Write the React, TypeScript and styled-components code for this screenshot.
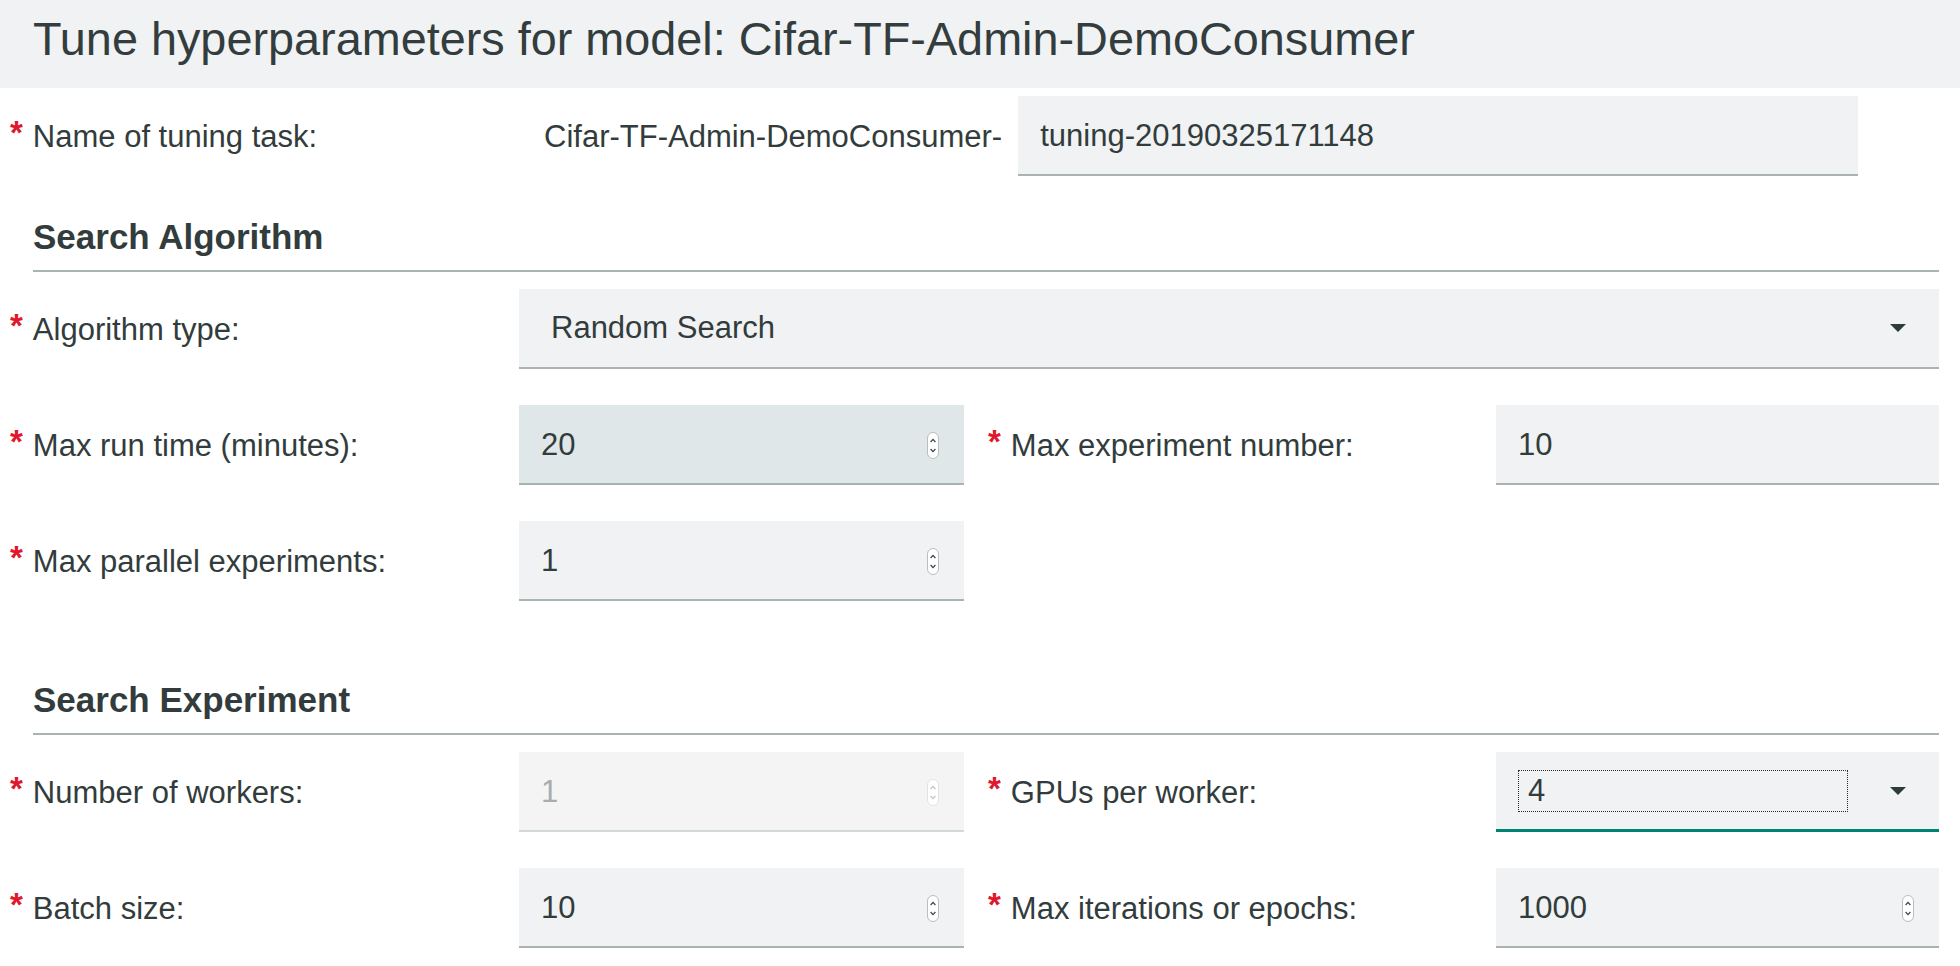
import React from "react";
import styled, { createGlobalStyle, css } from "styled-components";

const GlobalStyle = createGlobalStyle`
  html, body { margin: 0; padding: 0; background: #ffffff; }
  body {
    font-family: "Liberation Sans", Arial, Helvetica, sans-serif;
    color: #323c3c;
  }
  * { box-sizing: border-box; }
`;

const Header = styled.header`
  height: 88px;
  background: #f0f2f3;
  padding: 0 0 10px 33px;
`;

const Title = styled.h1`
  margin: 0;
  font-size: 46.8px;
  font-weight: 400;
  line-height: 78px;
  color: #333d3d;
  white-space: nowrap;
`;

const Form = styled.form`
  padding: 8px 21px 40px 10px;
  display: flex;
  flex-direction: column;
`;

const NameRow = styled.div`
  display: flex;
  align-items: center;
  height: 80px;
`;

const FieldLabel = styled.label<{ $indent?: number; $width?: number }>`
  display: flex;
  align-items: center;
  padding-top: 2px;
  padding-left: ${(p) => p.$indent ?? 0}px;
  ${(p) => (p.$width ? css`width: ${p.$width}px; flex: none;` : "")}
  font-size: 31px;
  color: #323c3c;
  white-space: nowrap;
`;

const Req = styled.span`
  color: #e0182d;
  font-size: 33px;
  font-weight: 700;
  margin-right: 10px;
  position: relative;
  top: -4px;
`;

const Prefix = styled.span`
  padding-left: 25px;
  padding-top: 2px;
  font-size: 31px;
  color: #323c3c;
  white-space: nowrap;
`;

type BoxState = "normal" | "hover" | "disabled" | "focus";

const Box = styled.div<{ $state?: BoxState; $width?: number; $padLeft?: number; $span?: string }>`
  height: 80px;
  display: flex;
  align-items: center;
  padding: 2px 24px 0 ${(p) => p.$padLeft ?? 22}px;
  font-size: 31px;
  white-space: nowrap;
  ${(p) => (p.$width ? css`width: ${p.$width}px; flex: none;` : "")}
  ${(p) => (p.$span ? css`grid-column: ${p.$span};` : "")}
  background: ${(p) =>
    p.$state === "hover" ? "#dfe7e8" : p.$state === "disabled" ? "#f4f4f4" : "#f0f2f3"};
  color: ${(p) => (p.$state === "disabled" ? "#a9acac" : "#323c3c")};
  border-bottom: ${(p) =>
    p.$state === "focus"
      ? "3px solid #00846f"
      : p.$state === "disabled"
      ? "2px solid #d3d8d8"
      : "2px solid #a9b3b3"};
`;

const NameBox = styled(Box)`
  margin-left: 16px;
`;

const SectionTitle = styled.h2<{ $top: number }>`
  margin: ${(p) => p.$top}px 0 17px 23px;
  padding-bottom: 13px;
  border-bottom: 2px solid #a9b3b3;
  font-size: 35px;
  font-weight: 700;
  line-height: 40px;
  color: #323c3c;
`;

const FieldGrid = styled.div`
  display: grid;
  grid-template-columns: 509px 445px 532px 443px;
  grid-auto-rows: 80px;
  row-gap: 36px;
`;

const Value = styled.span``;

const Trail = styled.span`
  margin-left: auto;
  display: flex;
  align-items: center;
`;

const FocusRing = styled.span`
  display: flex;
  align-items: center;
  width: 330px;
  height: 42px;
  padding-left: 9px;
  border: 1px dotted #2a2a2a;
`;

const Spinner = ({ faded }: { faded?: boolean }) => (
  <svg width="14" height="29" viewBox="0 0 14 29">
    <rect
      x="1.5"
      y="1.5"
      width="11"
      height="26"
      rx="5.5"
      fill="#ffffff"
      stroke={faded ? "#e2e4e4" : "#b9bebe"}
      strokeWidth="1"
    />
    <path
      d="M4.6 11 L7 8.4 L9.4 11"
      fill="none"
      stroke={faded ? "#c2c4c4" : "#3f4646"}
      strokeWidth="1.3"
    />
    <path
      d="M4.6 18 L7 20.6 L9.4 18"
      fill="none"
      stroke={faded ? "#c2c4c4" : "#3f4646"}
      strokeWidth="1.3"
    />
  </svg>
);

const Caret = () => (
  <svg width="16" height="8" viewBox="0 0 16 8">
    <path d="M0 0 H16 L8 8 Z" fill="#2f3a3a" />
  </svg>
);

const Label = ({ children, indent }: { children: React.ReactNode; indent?: number }) => (
  <FieldLabel $indent={indent}>
    <Req>*</Req>
    {children}
  </FieldLabel>
);

export default function App() {
  return (
    <>
      <GlobalStyle />
      <Header>
        <Title>Tune hyperparameters for model: Cifar-TF-Admin-DemoConsumer</Title>
      </Header>
      <Form onSubmit={(e) => e.preventDefault()}>
        <NameRow>
          <FieldLabel $width={509}>
            <Req>*</Req>
            Name of tuning task:
          </FieldLabel>
          <Prefix>Cifar-TF-Admin-DemoConsumer-</Prefix>
          <NameBox $width={840}>
            <Value>tuning-20190325171148</Value>
          </NameBox>
        </NameRow>

        <SectionTitle $top={41}>Search Algorithm</SectionTitle>
        <FieldGrid>
          <Label>Algorithm type:</Label>
          <Box $span="2 / 5" $padLeft={32} style={{ paddingRight: 33, paddingTop: 0 }}>
            <Value>Random Search</Value>
            <Trail>
              <Caret />
            </Trail>
          </Box>

          <Label>Max run time (minutes):</Label>
          <Box $state="hover">
            <Value>20</Value>
            <Trail>
              <Spinner />
            </Trail>
          </Box>
          <Label indent={24}>Max experiment number:</Label>
          <Box>
            <Value>10</Value>
          </Box>

          <Label>Max parallel experiments:</Label>
          <Box>
            <Value>1</Value>
            <Trail>
              <Spinner />
            </Trail>
          </Box>
        </FieldGrid>

        <SectionTitle $top={79}>Search Experiment</SectionTitle>
        <FieldGrid>
          <Label>Number of workers:</Label>
          <Box $state="disabled">
            <Value>1</Value>
            <Trail>
              <Spinner faded />
            </Trail>
          </Box>
          <Label indent={24}>GPUs per worker:</Label>
          <Box $state="focus" style={{ paddingRight: 33, paddingTop: 0 }}>
            <FocusRing>4</FocusRing>
            <Trail>
              <Caret />
            </Trail>
          </Box>

          <Label>Batch size:</Label>
          <Box>
            <Value>10</Value>
            <Trail>
              <Spinner />
            </Trail>
          </Box>
          <Label indent={24}>Max iterations or epochs:</Label>
          <Box>
            <Value>1000</Value>
            <Trail>
              <Spinner />
            </Trail>
          </Box>
        </FieldGrid>
      </Form>
    </>
  );
}
